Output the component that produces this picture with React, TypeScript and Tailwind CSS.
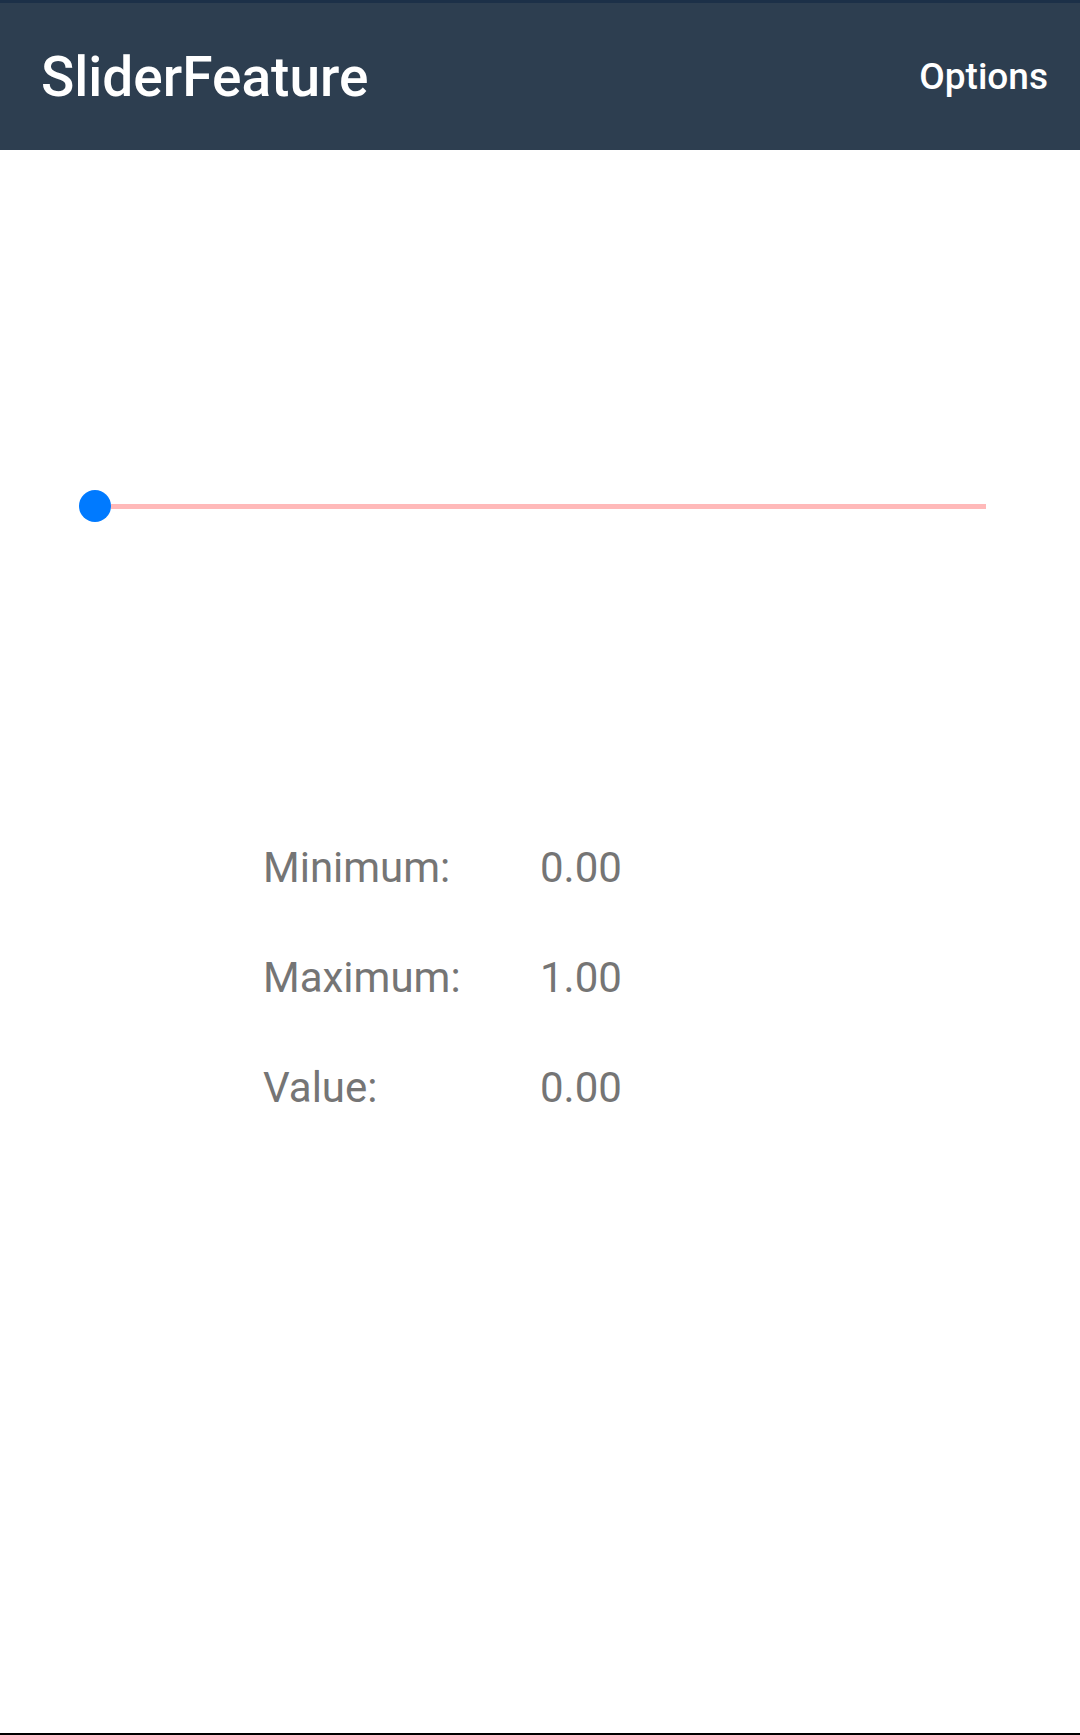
import React from "react";

const rows = [
  { label: "Minimum:", value: "0.00" },
  { label: "Maximum:", value: "1.00" },
  { label: "Value:", value: "0.00" },
];

export default function App() {
  return (
    <div className="flex h-[1735px] flex-col border-b-2 border-black bg-white font-['Roboto',sans-serif]">
      {/* Toolbar */}
      <div className="flex h-[150px] shrink-0 items-center justify-between border-t-[3px] border-[#1c3048] bg-[#2d3e50] pl-[41px] pr-[32px]">
        <h1 className="mt-[2px] text-[55px] font-medium leading-none text-white">SliderFeature</h1>
        <button className="text-[37px] font-medium leading-none text-white">Options</button>
      </div>

      {/* Slider */}
      <div className="mt-[340px] flex h-8 items-center pl-[79px] pr-[94px]">
        <div className="z-10 h-8 w-8 shrink-0 rounded-full bg-[#007aff]" />
        <div className="h-[5px] flex-1 bg-[#ffb9b9]" />
      </div>

      {/* Values */}
      <div className="mt-[291px] flex flex-col pl-[263px]">
        {rows.map((r) => (
          <div key={r.label} className="flex text-[42px] leading-[110px] text-[#757575]">
            <span className="w-[277px]">{r.label}</span>
            <span>{r.value}</span>
          </div>
        ))}
      </div>
    </div>
  );
}
